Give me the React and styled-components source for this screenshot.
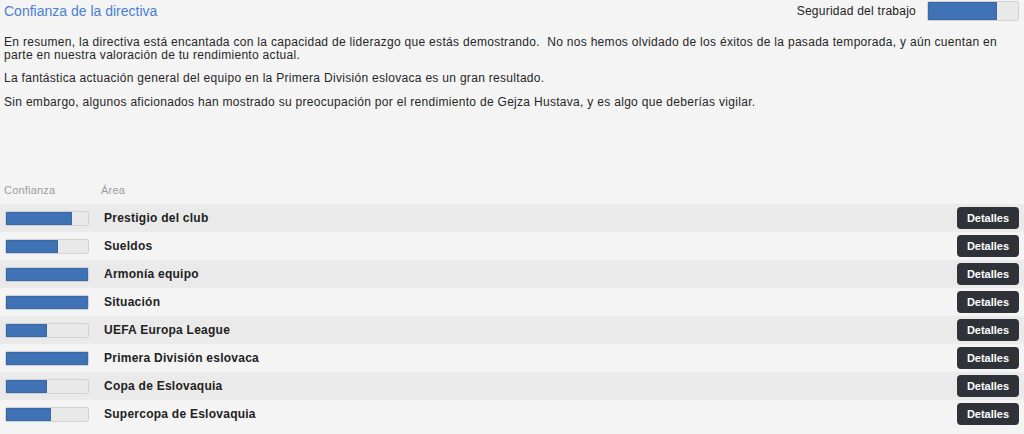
import React from "react";
import styled, { createGlobalStyle } from "styled-components";

const GlobalStyle = createGlobalStyle`
  html, body {
    margin: 0;
    padding: 0;
    background: #f4f4f4;
    font-family: "Liberation Sans", Arial, sans-serif;
    color: #222;
  }
`;

const areas = [
  { name: "Prestigio del club", value: 80 },
  { name: "Sueldos", value: 64 },
  { name: "Armonía equipo", value: 100 },
  { name: "Situación", value: 100 },
  { name: "UEFA Europa League", value: 50 },
  { name: "Primera División eslovaca", value: 100 },
  { name: "Copa de Eslovaquia", value: 50 },
  { name: "Supercopa de Eslovaquia", value: 55 },
];

const Page = styled.div`
  width: 1024px;
  height: 434px;
  overflow: hidden;
  display: flex;
  flex-direction: column;
`;

const Header = styled.div`
  display: flex;
  justify-content: space-between;
  align-items: flex-start;
  padding: 1px 5px 0 4px;
`;

const Title = styled.h1`
  margin: 2px 0 0;
  font-size: 14px;
  font-weight: 400;
  color: #4a7fd2;
`;

const Security = styled.div`
  display: flex;
  align-items: center;
  gap: 11px;
  font-size: 12px;
  letter-spacing: 0.25px;
  color: #222;
`;

const Bar = styled.div`
  box-sizing: border-box;
  width: ${(p) => p.$w}px;
  height: ${(p) => p.$h}px;
  background: #e9e9e9;
  border: 1px solid #d2d2d2;
  border-radius: 2px;
  overflow: hidden;
`;

const Fill = styled.div`
  height: 100%;
  background: #3f73b6;
  box-shadow: inset 0 0 0 1px #3868a6;
`;

const Text = styled.div`
  padding: 15px 4px 0 4px;
  font-size: 12px;
  line-height: 12.5px;
  letter-spacing: 0.3px;
  color: #262626;

  p {
    margin: 0 0 11px;
  }
`;

const Table = styled.div`
  margin-top: auto;
  display: flex;
  flex-direction: column;
  padding-bottom: 6px;
`;

const HeadRow = styled.div`
  display: grid;
  grid-template-columns: 97px 1fr;
  padding: 0 0 8px 4px;
  font-size: 11px;
  letter-spacing: 0.2px;
  color: #9a9ca0;
`;

const Row = styled.div`
  display: grid;
  grid-template-columns: 99px 1fr auto;
  align-items: center;
  height: 28px;
  padding: 0 5px 0 5px;
  background: ${(p) => (p.$odd ? "#eaeaea" : "#f4f4f4")};
`;

const AreaName = styled.div`
  font-size: 12px;
  font-weight: 700;
  letter-spacing: 0.25px;
  color: #222;
`;

const Button = styled.button`
  width: 62px;
  height: 22px;
  border: 0;
  border-radius: 4px;
  background: #2f3339;
  color: #fff;
  font-family: "Liberation Sans", Arial, sans-serif;
  font-size: 11px;
  font-weight: 700;
  cursor: pointer;
`;

export default function App() {
  return (
    <>
      <GlobalStyle />
      <Page>
        <Header>
          <Title>Confianza de la directiva</Title>
          <Security>
            Seguridad del trabajo
            <Bar $w={92} $h={20}>
              <Fill style={{ width: "77%" }} />
            </Bar>
          </Security>
        </Header>
        <Text>
          <p>
            En resumen, la directiva está encantada con la capacidad de liderazgo que estás demostrando.&nbsp; No nos hemos olvidado de los éxitos de la pasada temporada, y aún cuentan en parte en nuestra valoración de tu rendimiento actual.
          </p>
          <p>La fantástica actuación general del equipo en la Primera División eslovaca es un gran resultado.</p>
          <p>
            Sin embargo, algunos aficionados han mostrado su preocupación por el rendimiento de Gejza Hustava, y es algo que deberías vigilar.
          </p>
        </Text>
        <Table>
          <HeadRow>
            <span>Confianza</span>
            <span>Área</span>
          </HeadRow>
          {areas.map((a, i) => (
            <Row key={a.name} $odd={i % 2 === 0}>
              <Bar $w={84} $h={15}>
                <Fill style={{ width: `${a.value}%` }} />
              </Bar>
              <AreaName>{a.name}</AreaName>
              <Button>Detalles</Button>
            </Row>
          ))}
        </Table>
      </Page>
    </>
  );
}
